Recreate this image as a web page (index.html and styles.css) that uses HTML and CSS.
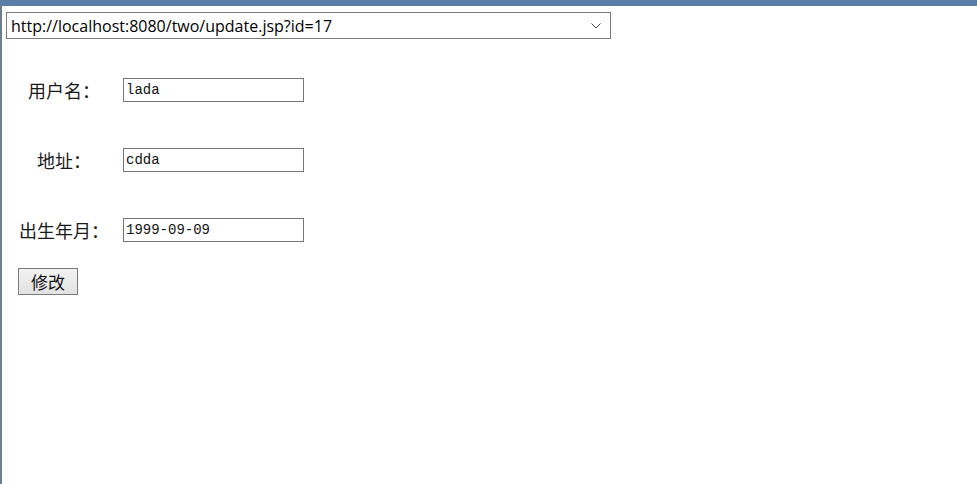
FILE: index.html
```html
<!DOCTYPE html>
<html lang="zh">
<head>
<meta charset="utf-8">
<title>update</title>
<link rel="stylesheet" href="styles.css">
</head>
<body>
<div class="topbar"></div>
<div class="frame">
  <div class="address">
    <span class="url">http://localhost:8080/two/update.jsp?id=17</span>
    <svg class="chev" width="10" height="6" viewBox="0 0 10 6"><path d="M0.5 0.5 L5 5 L9.5 0.5" fill="none" stroke="#444" stroke-width="1"/></svg>
  </div>
  <form class="form">
    <div class="row">
      <label class="label">用户名：</label>
      <input class="field" type="text" value="lada">
    </div>
    <div class="row">
      <label class="label">地址：</label>
      <input class="field" type="text" value="cdda">
    </div>
    <div class="row">
      <label class="label">出生年月：</label>
      <input class="field" type="text" value="1999-09-09">
    </div>
    <button class="submit" type="button">修改</button>
  </form>
</div>
</body>
</html>
```
FILE: styles.css
```css
html, body {
  margin: 0;
  padding: 0;
  background: #fff;
  height: 100%;
}
body {
  display: flex;
  flex-direction: column;
  overflow: hidden;
}
.topbar {
  height: 6px;
  background: #5b7fa9;
  flex: none;
}
.frame {
  flex: 1;
  border-left: 2px solid #6d7d8d;
  padding: 6px 0 0 4px;
}
.address {
  box-sizing: border-box;
  width: 605px;
  height: 27px;
  border: 1px solid #7a7a7a;
  display: flex;
  align-items: center;
  justify-content: space-between;
  padding: 0 9px 0 4px;
  font-family: "Open Sans", "Noto Sans", sans-serif;
  font-size: 16px;
  color: #000;
}
.chev {
  display: block;
}
.form {
  display: flex;
  flex-direction: column;
  align-items: flex-start;
  padding: 39px 0 0 12px;
}
.row {
  display: grid;
  grid-template-columns: 92px 181px;
  column-gap: 13px;
  align-items: center;
  margin-bottom: 46px;
}
.row:last-of-type {
  margin-bottom: 26px;
}
.label {
  text-align: center;
  font-family: "Noto Sans CJK SC", serif;
  font-size: 18px;
  color: #1a1a1a;
  line-height: 24px;
}
.field {
  box-sizing: border-box;
  width: 181px;
  height: 24px;
  margin: 0;
  border: 1px solid #767676;
  padding: 0 2px;
  font-family: "Liberation Mono", monospace;
  font-size: 14px;
  color: #111;
  background: #fff;
  outline: none;
}
.submit {
  box-sizing: border-box;
  width: 60px;
  height: 27px;
  margin: 0;
  border: 1px solid #7a7a7a;
  background: linear-gradient(#f2f2f2, #e2e2e2);
  font-family: "Noto Sans CJK SC", sans-serif;
  font-size: 17px;
  line-height: 1;
  color: #111;
  padding: 0;
}
```
